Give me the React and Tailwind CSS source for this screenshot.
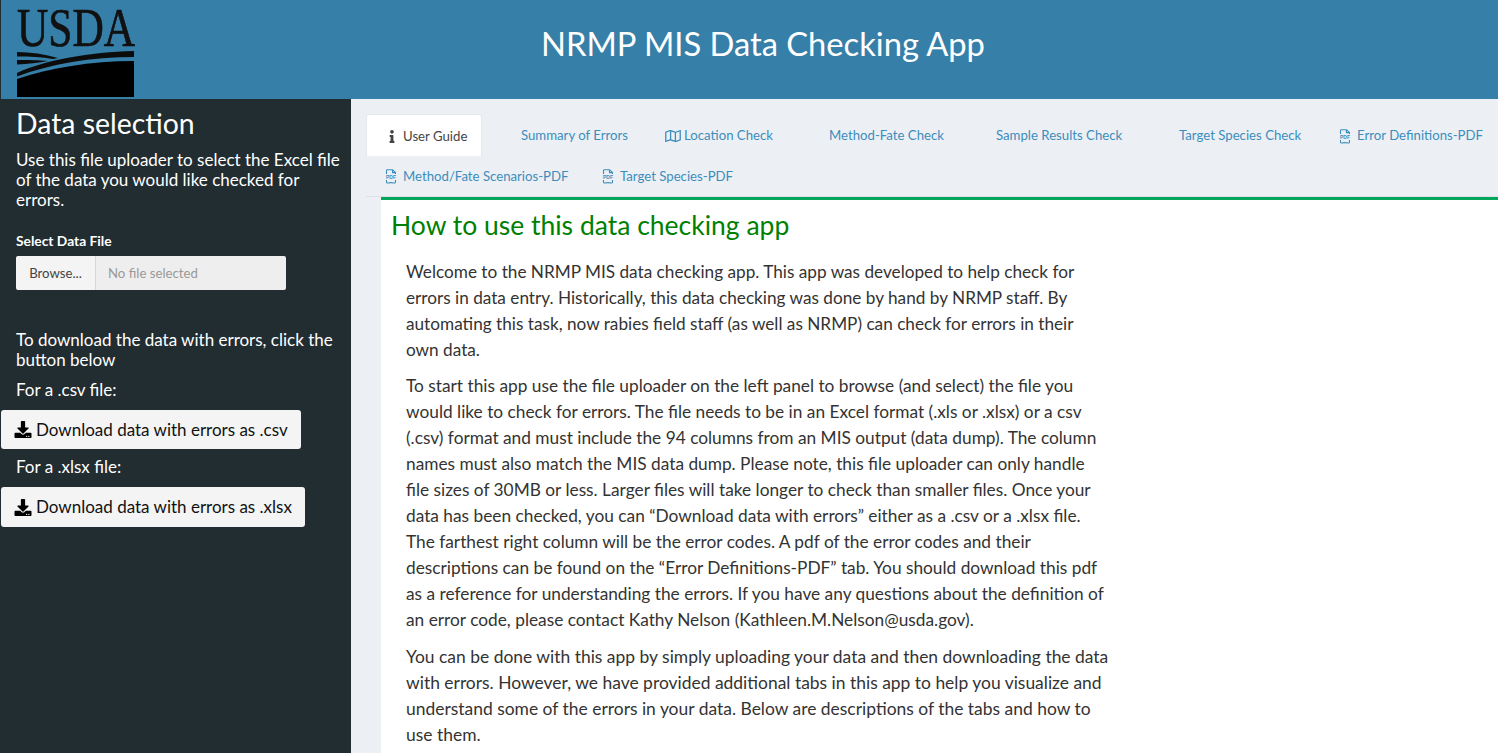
import React from "react";
import { FaInfo, FaRegMap, FaDownload } from "react-icons/fa";

const font = "font-['Lato','Noto_Sans',sans-serif]";

function Logo() {
  return (
    <svg width="120" height="91" viewBox="16 7 120 91" className="ml-[15px] mt-[7px] shrink-0 overflow-visible">
      <text transform="translate(17 45.5) scale(0.803 1)" fontFamily="Liberation Serif" fontSize="54" fill="#111" stroke="#111" strokeWidth="0.7">USDA</text>
      <path d="M17 52 C30 52 45 54 58 58 L53 59 C42 57 30 56.5 17 56.5 Z" fill="#0c0c0c" />
      <path d="M17 60 C28 60 40 60 48 61 C38 63 28 64 17 64.5 Z" fill="#0c0c0c" />
      <path d="M17 73 C45 60 90 52 134 51 V57 C92 57 50 64 17 76.5 Z" fill="#0c0c0c" />
      <path d="M17 79 C50 68 90 61 134 61 V97 H17 Z" fill="#000" />
    </svg>
  );
}

function PdfIcon() {
  return (
    <svg width="12" height="15" viewBox="0 0 12 15" className="mr-[6px] shrink-0" fill="none">
      <path d="M1.5 5 V1.6 Q1.5 .7 2.4 .7 H7.5 L10.5 3.6 V5 M7.5 .7 V3.6 H10.5 M1.5 11 V13 Q1.5 14.3 3 14 Q6 13.3 9 14 Q10.5 14.3 10.5 13 V11" stroke="currentColor" strokeWidth="1.1" />
      <text x="6" y="9.9" fontSize="5" fontWeight="700" textAnchor="middle" fill="currentColor" fontFamily="Liberation Sans">PDF</text>
    </svg>
  );
}

function Tab({ icon, children, className = "" }) {
  return (
    <div className={`flex items-center h-[41px] text-[13.2px] text-[#3c8dbc] whitespace-nowrap ${className}`}>
      {icon}
      <span>{children}</span>
    </div>
  );
}

function DownloadButton({ children, className = "" }) {
  return (
    <button className={`flex items-center h-[39px] ml-[1px] pl-[13px] bg-[#f4f4f4] rounded-[3px] text-[17px] text-[#111] whitespace-nowrap ${className}`}>
      <FaDownload className="w-[18px] h-[17px] mr-[4px] text-black" />
      {children}
    </button>
  );
}

export default function App() {
  return (
    <div className={`h-screen overflow-hidden flex flex-col bg-[#ecf0f5] ${font}`}>
      <header className="h-[99px] shrink-0 flex bg-[#367fa9] border-l border-l-[#222d32]">
        <Logo />
        <h1 className="ml-[405px] mt-[23px] text-[32.7px] leading-[42px] text-white whitespace-nowrap">NRMP MIS Data Checking App</h1>
      </header>
      <div className="flex flex-1 min-h-0">
        <aside className="w-[351px] shrink-0 bg-[#222d32] text-white">
          <h2 className="ml-[16px] mt-[6px] text-[28.4px] leading-[36px]">Data selection</h2>
          <p className="ml-[16px] mt-[9px] text-[17px] leading-[20px] w-[330px] whitespace-nowrap">
            Use this file uploader to select the Excel file<br />of the data you would like checked for<br />errors.
          </p>
          <div className="ml-[16px] mt-[22px] text-[13.8px] font-bold leading-[18px]">Select Data File</div>
          <div className="ml-[16px] mt-[6px] w-[270px] h-[34px] flex rounded-[2px] overflow-hidden text-[13.2px]">
            <div className="w-[80px] flex items-center justify-center pt-[1px] bg-[#f4f4f4] text-[#444] border-r border-r-[#d2d6de]">Browse...</div>
            <div className="flex-1 flex items-center pt-[1px] pl-[12px] bg-[#eeeeee] text-[#999]">No file selected</div>
          </div>
          <p className="ml-[16px] mt-[40px] text-[17px] leading-[20px] whitespace-nowrap">
            To download the data with errors, click the<br />button below
          </p>
          <p className="ml-[16px] mt-[10px] text-[17px] leading-[20px]">For a .csv file:</p>
          <DownloadButton className="mt-[10px] w-[300px]">Download data with errors as .csv</DownloadButton>
          <p className="ml-[16px] mt-[8px] text-[17px] leading-[20px]">For a .xlsx file:</p>
          <DownloadButton className="mt-[10px] w-[304px] h-[40px]">Download data with errors as .xlsx</DownloadButton>
        </aside>
        <main className="flex-1 min-w-0 pl-[15px] pt-[15px]">
          <div className="border-b border-b-[#dde1e6] h-[83px]">
            <div className="flex h-[42px]">
              <Tab className="w-[116px] h-[42px] pl-[20px] pt-[2px] bg-white rounded-t-[3px] border border-b-0 border-[#e4e7ec] text-[#444]" icon={<FaInfo className="w-[10px] h-[13px] mr-[6px] text-[#444]" />}>User Guide</Tab>
              <Tab className="ml-[39px] w-[144px] h-[42px] pt-[2px]">Summary of Errors</Tab>
              <Tab className="w-[164px] h-[42px] pt-[2px]" icon={<FaRegMap className="w-[16px] h-[14px] mr-[3px]" />}>Location Check</Tab>
              <Tab className="w-[167px] h-[42px] pt-[2px]">Method-Fate Check</Tab>
              <Tab className="w-[183px] h-[42px] pt-[2px]">Sample Results Check</Tab>
              <Tab className="w-[160px] h-[42px] pt-[2px]">Target Species Check</Tab>
              <Tab className="h-[42px] pt-[2px]" icon={<PdfIcon />}>Error Definitions-PDF</Tab>
            </div>
            <div className="flex">
              <Tab className="ml-[19px] w-[217px]" icon={<PdfIcon />}>Method/Fate Scenarios-PDF</Tab>
              <Tab icon={<PdfIcon />}>Target Species-PDF</Tab>
            </div>
          </div>
          <section className="ml-[15px] h-full bg-white border-t-[3px] border-t-[#00a65a] pl-[10px]">
            <h2 className="mt-[9px] text-[26.5px] leading-[33px] text-[#008000]">How to use this data checking app</h2>
            <div className="ml-[15px] mt-[17px] w-[710px] text-[17.2px] leading-[26px] text-[#333] whitespace-nowrap">
              <p>
                Welcome to the NRMP MIS data checking app. This app was developed to help check for<br />
                errors in data entry. Historically, this data checking was done by hand by NRMP staff. By<br />
                automating this task, now rabies field staff (as well as NRMP) can check for errors in their<br />
                own data.
              </p>
              <p className="mt-[10px] text-[17.3px]">
                To start this app use the file uploader on the left panel to browse (and select) the file you<br />
                would like to check for errors. The file needs to be in an Excel format (.xls or .xlsx) or a csv<br />
                (.csv) format and must include the 94 columns from an MIS output (data dump). The column<br />
                names must also match the MIS data dump. Please note, this file uploader can only handle<br />
                file sizes of 30MB or less. Larger files will take longer to check than smaller files. Once your<br />
                data has been checked, you can “Download data with errors” either as a .csv or a .xlsx file.<br />
                The farthest right column will be the error codes. A pdf of the error codes and their<br />
                descriptions can be found on the “Error Definitions-PDF” tab. You should download this pdf<br />
                as a reference for understanding the errors. If you have any questions about the definition of<br />
                an error code, please contact Kathy Nelson (Kathleen.M.Nelson@usda.gov).
              </p>
              <p className="mt-[11px] text-[17.45px]">
                You can be done with this app by simply uploading your data and then downloading the data<br />
                with errors. However, we have provided additional tabs in this app to help you visualize and<br />
                understand some of the errors in your data. Below are descriptions of the tabs and how to<br />
                use them.
              </p>
            </div>
          </section>
        </main>
      </div>
    </div>
  );
}
